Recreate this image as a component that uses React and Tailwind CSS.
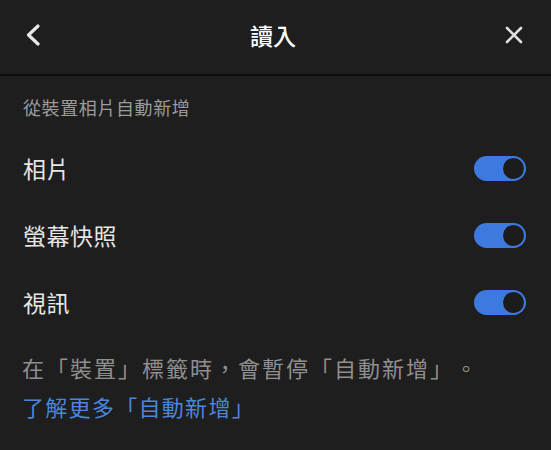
import React from "react";

const font = {
  fontFamily: '"Noto Sans CJK TC", "Noto Sans", sans-serif',
};

function Toggle() {
  return (
    <div className="w-[52px] h-[25px] rounded-full bg-[#3d7ae0] flex items-center justify-end pr-[2px]">
      <div className="w-[21px] h-[21px] rounded-full bg-[#1c1c1c]" />
    </div>
  );
}

function Row({ label }) {
  return (
    <div className="h-[67px] flex items-center justify-between pl-[23px] pr-[25px]">
      <span className="text-[23px] tracking-[0.5px] text-[#e6e6e6] leading-none">{label}</span>
      <Toggle />
    </div>
  );
}

export default function App() {
  return (
    <div lang="zh-Hant" className="w-[551px] h-[450px] bg-[#1e1e1e] overflow-hidden" style={font}>
      {/* HEADER */}
      <div className="h-[74px] flex items-center justify-between px-[24px] pb-[4px]">
        <svg width="16" height="22" viewBox="0 0 16 22" className="ml-[1px]">
          <path d="M13 2 L3.5 11 L13 20" fill="none" stroke="#e8e8e8" strokeWidth="3.2" strokeLinecap="round" strokeLinejoin="round" />
        </svg>
        <h1 className="text-[23px] text-white font-medium leading-none">讀入</h1>
        <svg width="18" height="18" viewBox="0 0 18 18" className="mr-[4px]">
          <path d="M2 2 L16 16 M16 2 L2 16" fill="none" stroke="#e0e0e0" strokeWidth="2.6" strokeLinecap="round" />
        </svg>
      </div>
      <div className="h-[2px] bg-[#0d0d0d]" />

      {/* SUBTITLE */}
      <p className="pl-[23px] pt-[19px] pb-[16px] text-[18px] tracking-[0.6px] text-[#9b9b9b] leading-[24px]">
        從裝置相片自動新增
      </p>

      {/* ROWS */}
      <Row label="相片" />
      <Row label="螢幕快照" />
      <Row label="視訊" />

      {/* FOOTER */}
      <div className="pl-[22px] pt-[12px]">
        <p className="text-[22px] tracking-[2px] text-[#8f8f8f] leading-[39px]">
          在「裝置」標籤時，會暫停「自動新增」<span className="ml-[12px]">。</span>
        </p>
        <p className="text-[22px] tracking-[1.3px] text-[#4a87dc] leading-[39px]">
          了解更多「自動新增」
        </p>
      </div>
    </div>
  );
}
